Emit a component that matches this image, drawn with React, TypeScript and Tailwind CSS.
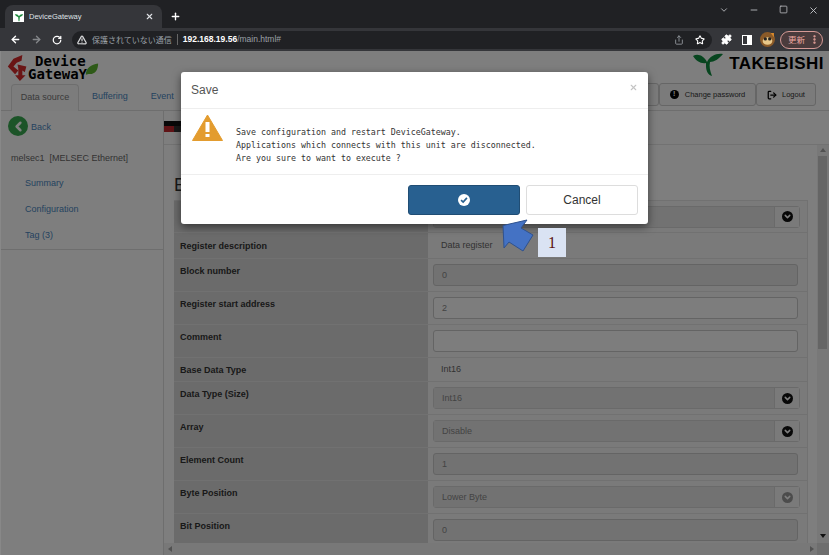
import { ArrowLeft, ArrowRight, ChevronDown, ChevronLeft, Minus, Plus, RotateCw, Share, Square, Star, X, Puzzle, EllipsisVertical, TriangleAlert, LogOut } from "lucide-react";

const rows = [
  { label: "Register description", h: "h-[26px]", pt: "pt-[6px]", text: "Data register" },
  { label: "Block number", h: "h-[33px]", pt: "pt-[5px]", input: "0" },
  { label: "Register start address", h: "h-[33px]", pt: "pt-[5px]", input: "2", light: true },
  { label: "Comment", h: "h-[33px]", pt: "pt-[5px]", input: "", light: true },
  { label: "Base Data Type", h: "h-[24px]", pt: "pt-[5px]", text: "Int16" },
  { label: "Data Type (Size)", h: "h-[33px]", pt: "pt-[5px]", select: "Int16" },
  { label: "Array", h: "h-[33px]", pt: "pt-[5px]", select: "Disable" },
  { label: "Element Count", h: "h-[33px]", pt: "pt-[5px]", input: "1" },
  { label: "Byte Position", h: "h-[33px]", pt: "pt-[5px]", select: "Lower Byte", off: true },
  { label: "Bit Position", h: "h-[33px]", pt: "pt-[5px]", input: "0" },
];

function ChevronDot({ off }: { off?: boolean }) {
  return (
    <span className={`flex h-[11px] w-[11px] items-center justify-center rounded-full ${off ? "bg-[#999]" : "bg-[#111]"}`}>
      <ChevronDown size={9} strokeWidth={4} className="text-white" />
    </span>
  );
}

function Select({ value, off }: { value: string; off?: boolean }) {
  return (
    <div className="flex h-[22px] w-[367px] rounded-[3px] border border-[#d4d4d4]">
      <div className="flex-1 border-r border-[#d4d4d4] bg-[#e4e4e4] px-2 text-[9px] leading-[20px] text-[#888]">{value}</div>
      <div className="flex w-6 items-center justify-center bg-[#f4f4f4]">
        <ChevronDot off={off} />
      </div>
    </div>
  );
}

function Row({ row }: { row: (typeof rows)[number] }) {
  return (
    <div className={`flex border-b border-[#e2e2e2] ${row.h}`}>
      <div className={`w-[254px] shrink-0 bg-[#d6d6d6] px-[6px] text-[9px] font-bold leading-[14px] text-[#333] ${row.pt}`}>
        {row.label}
      </div>
      <div className="flex flex-1 items-center bg-[#f4f4f4] px-[5px]">
        {row.text && <span className="px-2 text-[9px] text-[#666]">{row.text}</span>}
        {row.input !== undefined && (
          <div className={`h-[22px] w-[365px] rounded-[3px] border border-[#c8c8c8] px-2 text-[9px] leading-[20px] text-[#888] ${row.light ? "bg-[#fafafa]" : "bg-[#e4e4e4]"}`}>
            {row.input}
          </div>
        )}
        {row.select && <Select value={row.select} off={row.off} />}
      </div>
    </div>
  );
}

export default function App() {
  return (
    <div className="relative flex h-[555px] w-[829px] flex-col overflow-hidden bg-white font-['Liberation_Sans',sans-serif]">
      {/* Browser chrome */}
      <div className="flex h-[28px] shrink-0 items-end bg-[#202124] pl-[5px]">
        <div className="flex h-[23px] w-[157px] items-center gap-[5px] rounded-t-lg bg-[#35363a] px-2">
          <span className="flex h-[11px] w-[11px] items-center justify-center bg-white">
            <svg viewBox="0 0 12 12" className="h-[10px] w-[10px]">
              <path d="M1 3c2-1 4 0 5 2 1-2 3-3 5-2-1 2-3 3-4 3l-.5 5h-1L5 6C4 6 2 5 1 3z" fill="#1c8a3c" />
            </svg>
          </span>
          <span className="flex-1 text-[7.5px] text-[#dfe1e5]">DeviceGateway</span>
          <X size={9} strokeWidth={3} className="text-[#dfe1e5]" />
        </div>
        <Plus size={11} strokeWidth={3} className="mb-[6px] ml-[8px] text-white" />
        <div className="ml-auto flex h-full items-start gap-[20px] pr-[10px] pt-[5px] text-[#c4c6ca]">
          <ChevronDown size={10} />
          <Minus size={10} />
          <Square size={9} strokeWidth={2} />
          <X size={11} />
        </div>
      </div>
      <div className="flex h-[23px] shrink-0 items-center bg-[#35363a] pl-[10px]">
        <ArrowLeft size={11} strokeWidth={3} className="text-white" />
        <ArrowRight size={11} strokeWidth={3} className="ml-[10px] text-[#85878a]" />
        <RotateCw size={10} strokeWidth={3} className="ml-[10px] text-white" />
        <div className="ml-[10px] flex h-[18px] w-[640px] items-center rounded-full bg-[#202124] pl-[5px] pr-[7px] text-[8.5px]">
          <TriangleAlert size={10} strokeWidth={3} className="text-[#d6d7d9]" />
          <span className="ml-[5px] font-['Noto_Sans_CJK_JP',sans-serif] text-[8px] text-[#9aa0a6]">保護されていない通信</span>
          <span className="mx-[5px] h-[11px] w-px bg-[#666]" />
          <span className="font-bold text-white">192.168.19.56</span>
          <span className="text-[#9aa0a6]">/main.html#</span>
          <Share size={10} className="ml-auto text-[#9aa0a6]" />
          <Star size={10} strokeWidth={2.5} className="ml-[11px] text-white" />
        </div>
        <Puzzle size={11} fill="white" className="ml-[9px] text-white" />
        <span className="ml-[10px] flex h-[10px] w-[10px] justify-end border border-white">
          <span className="h-full w-[4px] bg-white" />
        </span>
        <svg viewBox="0 0 14 14" className="ml-[8px] h-[15px] w-[15px]">
          <circle cx="7" cy="7" r="7" fill="#8a5a28" />
          <ellipse cx="7" cy="8.5" rx="4.5" ry="3.5" fill="#e8c88a" />
          <circle cx="5" cy="6.5" r="1.5" fill="#222" />
          <circle cx="9" cy="6.5" r="1.5" fill="#222" />
          <path d="M10 1h3v4z" fill="#d98a2b" />
        </svg>
        <span className="ml-[5px] flex h-[18px] w-[43px] items-center justify-between rounded-full border border-[#d59a96] bg-[#4a3b3c] pl-[7px] pr-[2px] font-['Noto_Sans_CJK_JP',sans-serif] text-[8.5px] text-[#f0a8a0]">
          更新
          <EllipsisVertical size={11} strokeWidth={3} />
        </span>
      </div>

      {/* Page */}
      <div className="relative flex min-h-0 flex-1 flex-col border-l border-[#888] bg-[#fdfdfd]">
        <div className="flex h-[34px] shrink-0 items-start justify-between pl-[6px] pr-[5px]">
          <div className="flex pt-[3px]">
            <svg viewBox="0 0 26 28" preserveAspectRatio="none" className="h-[27px] w-[21px]">
              <path d="M19 1 8 5 1 13l9 8 4-4-6-4 4-4 6-2z" fill="#d42a2a" />
              <path d="M13 11l11 2-2 6-3-2v5h4l-7 6-6-6h4v-7z" fill="#d42a2a" />
            </svg>
            <div className="pt-[1px] font-['DejaVu_Sans_Mono',monospace] text-[14px] font-bold leading-[13px] text-black">
              <div className="pl-[7px]">Device</div>
              <div>GatewaY</div>
            </div>
            <svg viewBox="0 0 16 16" className="-ml-[2px] mt-[8px] h-[15px] w-[14px]">
              <path d="M1 14C1 6 7 2 15 1c0 8-4 13-11 12z" fill="#5cb531" />
            </svg>
          </div>
          <div className="flex items-center">
            <svg viewBox="0 0 32 24" className="mt-[2px] h-[24px] w-[32px]">
              <path d="M0 3c5-3 11 0 14 6 3-6 9-9 16-8-4 5-9 8-13 8-1 4 0 9 2 14-4-1-6-5-6-10 0-1 0-2 0-3C8 11 3 8 0 3z" fill="#0e8a3e" />
            </svg>
            <span className="ml-[4px] text-[17px] font-bold leading-[24px] tracking-[0.5px] text-black">TAKEBISHI</span>
          </div>
        </div>

        <div className="flex h-[26px] shrink-0 items-end border-b border-[#ddd] pl-[10px]">
          <div className="-mb-px flex h-[27px] w-[68px] items-center justify-center rounded-t border border-b-0 border-[#ddd] bg-[#f8f8f8] text-[9px] text-[#777]">Data source</div>
          <div className="ml-[13px] h-[24px] text-[9px] leading-[21px] text-[#4a86c0]">Buffering</div>
          <div className="ml-[23px] h-[24px] text-[9px] leading-[21px] text-[#4a86c0]">Event</div>
          <div className="mb-[4px] ml-auto flex pr-[13px]">
            <div className="h-[23px] w-[20px] rounded-[3px] border border-[#ccc] bg-[#f6f6f6]" />
            <div className="flex h-[23px] w-[97px] items-center justify-center gap-[6px] rounded-[3px] border border-[#ccc] bg-[#f6f6f6] text-[7.5px] font-medium text-[#333]">
              <span className="flex h-[9px] w-[9px] items-center justify-center rounded-full bg-black text-[7px] font-bold text-white">!</span>
              Change password
            </div>
            <div className="flex h-[23px] w-[60px] items-center justify-center gap-[5px] rounded-[3px] border border-[#ccc] bg-[#f6f6f6] text-[7.5px] font-medium text-[#333]">
              <LogOut size={10} strokeWidth={3} className="text-black" />
              Logout
            </div>
          </div>
        </div>

        <div className="flex min-h-0 flex-1">
          {/* Sidebar */}
          <aside className="w-[163px] shrink-0 border-r border-[#ddd]">
            <div className="flex items-center gap-[3px] pl-[7px] pt-[5px]">
              <span className="flex h-[20px] w-[20px] items-center justify-center rounded-full bg-[#38a850]">
                <ChevronLeft size={15} strokeWidth={4} className="text-white" />
              </span>
              <span className="pt-[3px] text-[9px] text-[#4a86c0]">Back</span>
            </div>
            <div className="pl-[10px] pt-[15px] text-[9px] leading-[14px] text-[#666]">melsec1&nbsp; [MELSEC Ethernet]</div>
            <div className="flex h-[85px] flex-col border-b border-[#ddd] pl-[24px] pt-[5px] text-[9px] leading-[26px] text-[#4a86c0]">
              <span>Summary</span>
              <span>Configuration</span>
              <span>Tag (3)</span>
            </div>
          </aside>

          {/* Content */}
          <main className="flex min-w-0 flex-1 flex-col">
            <div className="flex h-[33px] shrink-0 items-center">
              <svg viewBox="0 0 18 16" className="h-[16px] w-[18px]">
                <rect x="0" y="1" width="18" height="5" fill="#111" />
                <rect x="0" y="6" width="10" height="6" fill="#c0272d" />
                <rect x="10" y="6" width="8" height="6" fill="#333" />
              </svg>
            </div>
            <div className="flex min-h-0 flex-1 flex-col border-t border-[#e4e4e4]">
              <div className="flex min-h-0 flex-1">
                <div className="min-w-0 flex-1 overflow-hidden pl-[10px]">
                  <div className="h-[55px] pt-[26px] text-[18px] leading-[28px] text-[#333]">Edit</div>
                  <div className="w-[634px] border-r border-[#e2e2e2]">
                    <div className="flex h-[33px] border-y border-[#e2e2e2]">
                      <div className="w-[254px] bg-[#d6d6d6]" />
                      <div className="flex flex-1 items-center bg-[#f4f4f4] px-[5px]">
                        <Select value="" />
                      </div>
                    </div>
                    {rows.map((row) => (
                      <Row key={row.label} row={row} />
                    ))}
                  </div>
                </div>
                <div className="relative w-[12px] shrink-0 bg-[#f1f1f1] pl-px pr-[2px]">
                  <span className="absolute left-[3px] top-[3px] h-0 w-0 border-x-[3px] border-b-[4px] border-x-transparent border-b-[#a3a3a3]" />
                  <div className="mt-[11px] h-[193px] w-full bg-[#cbcbcb]" />
                  <span className="absolute bottom-[5px] left-[3px] h-0 w-0 border-x-[3px] border-t-[4px] border-x-transparent border-t-[#222]" />
                </div>
              </div>
              <div className="flex h-[12px] shrink-0 items-center bg-[#f1f1f1]">
                <span className="ml-[4px] h-0 w-0 border-y-[3px] border-r-[4px] border-y-transparent border-r-[#a3a3a3]" />
                <span className="ml-auto mr-[3px] h-0 w-0 border-y-[3px] border-l-[4px] border-y-transparent border-l-[#a3a3a3]" />
                <span className="h-full w-[12px] bg-[#dcdcdc]" />
              </div>
            </div>
          </main>
        </div>

        {/* Modal backdrop */}
        <div className="absolute inset-0 bg-black/50" />
      </div>

      {/* Save dialog */}
      <div className="absolute left-[181px] top-[72px] flex h-[152px] w-[467px] flex-col rounded-[3px] bg-white shadow-[0_3px_9px_rgba(0,0,0,0.5)]">
        <div className="flex h-[37px] shrink-0 items-start justify-between border-b border-[#eee] px-[10px]">
          <span className="pt-[11px] text-[12px] leading-[14px] text-[#555]">Save</span>
          <X size={9} strokeWidth={3} className="mt-[11px] text-[#c4c4c4]" />
        </div>
        <div className="flex h-[66px] shrink-0 border-b border-[#eee] pl-[11px]">
          <div className="mt-[5px] h-[28px] w-[31px]">
            <svg viewBox="0 0 31 28" className="h-full w-full">
              <path d="M15.5 1 30.5 26.5H.5z" fill="#e39c2f" stroke="#e39c2f" strokeLinejoin="round" />
              <rect x="13.5" y="8" width="4" height="10" fill="#fff" />
              <rect x="13.5" y="20" width="4" height="3" fill="#fff" />
            </svg>
          </div>
          <div className="whitespace-pre pl-[13px] pt-[16.5px] font-['DejaVu_Sans_Mono',monospace] text-[8.3px] leading-[13px] text-[#333]">
            {"Save configuration and restart DeviceGateway.\nApplications which connects with this unit are disconnected.\nAre you sure to want to execute ?"}
          </div>
        </div>
        <div className="flex flex-1 items-start justify-end gap-[6px] pr-[10px] pt-[10px]">
          <div className="flex h-[30px] w-[112px] items-center justify-center rounded-[3px] border border-[#204d74] bg-[#286090]">
            <span className="flex h-[12px] w-[12px] items-center justify-center rounded-full bg-white">
              <svg viewBox="0 0 12 12" className="h-[10px] w-[10px]">
                <path d="M2.5 6.2 5 8.5l4.5-5" fill="none" stroke="#286090" strokeWidth="2" />
              </svg>
            </span>
          </div>
          <div className="flex h-[30px] w-[112px] items-center justify-center rounded-[3px] border border-[#ddd] bg-white text-[12px] text-[#333]">
            Cancel
          </div>
        </div>
      </div>

      {/* Annotation arrow */}
      <svg viewBox="0 0 32 33" className="absolute left-[502px] top-[219px] h-[33px] w-[32px]">
        <path d="M25 1 1 6.5 2 29l5-6 14 9 10-16-12-7z" fill="#4472c4" stroke="#2f528f" strokeWidth="1" />
      </svg>
      <div className="absolute left-[538px] top-[228px] flex h-[29px] w-[28px] items-center justify-center bg-[#dae3f3] font-['Liberation_Serif',serif] text-[16px] text-[#5a1010]">
        1
      </div>
    </div>
  );
}
